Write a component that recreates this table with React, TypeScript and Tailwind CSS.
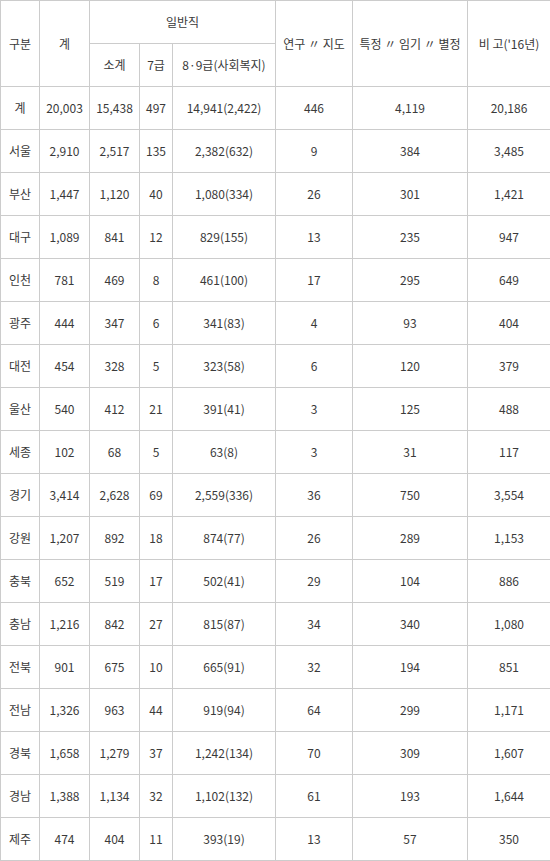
const rows: string[][] = [
  ["계", "20,003", "15,438", "497", "14,941(2,422)", "446", "4,119", "20,186"],
  ["서울", "2,910", "2,517", "135", "2,382(632)", "9", "384", "3,485"],
  ["부산", "1,447", "1,120", "40", "1,080(334)", "26", "301", "1,421"],
  ["대구", "1,089", "841", "12", "829(155)", "13", "235", "947"],
  ["인천", "781", "469", "8", "461(100)", "17", "295", "649"],
  ["광주", "444", "347", "6", "341(83)", "4", "93", "404"],
  ["대전", "454", "328", "5", "323(58)", "6", "120", "379"],
  ["울산", "540", "412", "21", "391(41)", "3", "125", "488"],
  ["세종", "102", "68", "5", "63(8)", "3", "31", "117"],
  ["경기", "3,414", "2,628", "69", "2,559(336)", "36", "750", "3,554"],
  ["강원", "1,207", "892", "18", "874(77)", "26", "289", "1,153"],
  ["충북", "652", "519", "17", "502(41)", "29", "104", "886"],
  ["충남", "1,216", "842", "27", "815(87)", "34", "340", "1,080"],
  ["전북", "901", "675", "10", "665(91)", "32", "194", "851"],
  ["전남", "1,326", "963", "44", "919(94)", "64", "299", "1,171"],
  ["경북", "1,658", "1,279", "37", "1,242(134)", "70", "309", "1,607"],
  ["경남", "1,388", "1,134", "32", "1,102(132)", "61", "193", "1,644"],
  ["제주", "474", "404", "11", "393(19)", "13", "57", "350"],
];

const cell = "border border-[#cccccc] text-center align-middle font-normal p-0 whitespace-nowrap";

export default function App() {
  return (
    <div className="w-[550px] bg-white text-[12px] text-[#3a3a3a] [font-family:'Noto_Sans_CJK_KR','Noto_Sans',sans-serif]">
      <table className="w-[550px] table-fixed border-collapse">
        <colgroup>
          <col className="w-[39px]" />
          <col className="w-[50px]" />
          <col className="w-[50px]" />
          <col className="w-[33px]" />
          <col className="w-[103px]" />
          <col className="w-[77px]" />
          <col className="w-[115px]" />
          <col className="w-[83px]" />
        </colgroup>
        <thead>
          <tr className="h-[43px]">
            <th rowSpan={2} className={cell}>구분</th>
            <th rowSpan={2} className={cell}>계</th>
            <th colSpan={3} className={cell}>일반직</th>
            <th rowSpan={2} className={cell}>연구 〃 지도</th>
            <th rowSpan={2} className={cell}>특정 〃 임기 〃 별정</th>
            <th rowSpan={2} className={cell}>비 고('16년)</th>
          </tr>
          <tr className="h-[43px]">
            <th className={cell}>소계</th>
            <th className={cell}>7급</th>
            <th className={cell}>8·9급(사회복지)</th>
          </tr>
        </thead>
        <tbody>
          {rows.map((r) => (
            <tr key={r[0]} className="h-[43px]">
              {r.map((v, i) => (
                <td key={i} className={cell}>{v}</td>
              ))}
            </tr>
          ))}
        </tbody>
      </table>
    </div>
  );
}
